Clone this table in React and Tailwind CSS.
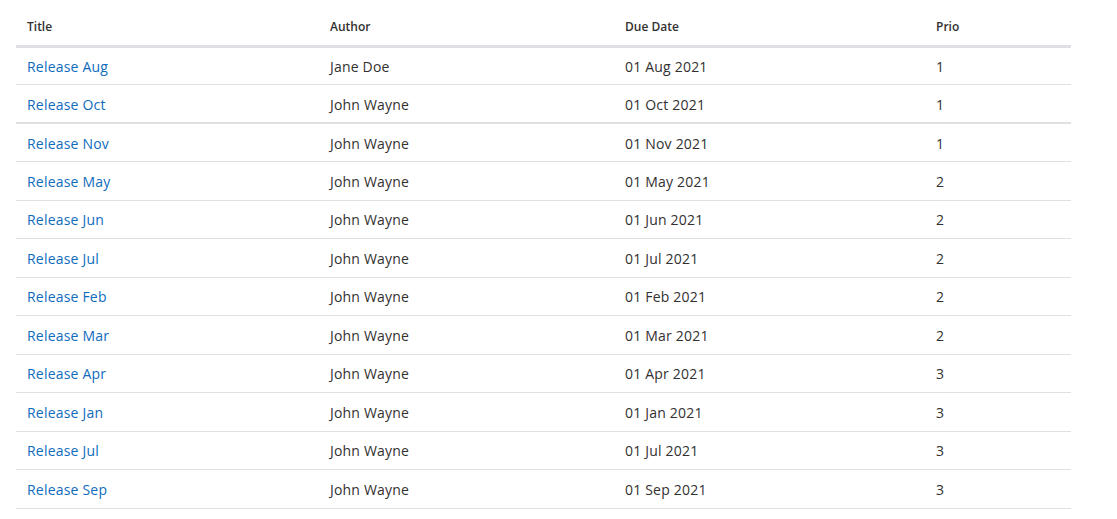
const rows = [
  { title: 'Release Aug', author: 'Jane Doe', due: '01 Aug 2021', prio: 1 },
  { title: 'Release Oct', author: 'John Wayne', due: '01 Oct 2021', prio: 1, thick: true },
  { title: 'Release Nov', author: 'John Wayne', due: '01 Nov 2021', prio: 1 },
  { title: 'Release May', author: 'John Wayne', due: '01 May 2021', prio: 2 },
  { title: 'Release Jun', author: 'John Wayne', due: '01 Jun 2021', prio: 2 },
  { title: 'Release Jul', author: 'John Wayne', due: '01 Jul 2021', prio: 2 },
  { title: 'Release Feb', author: 'John Wayne', due: '01 Feb 2021', prio: 2 },
  { title: 'Release Mar', author: 'John Wayne', due: '01 Mar 2021', prio: 2 },
  { title: 'Release Apr', author: 'John Wayne', due: '01 Apr 2021', prio: 3 },
  { title: 'Release Jan', author: 'John Wayne', due: '01 Jan 2021', prio: 3 },
  { title: 'Release Jul', author: 'John Wayne', due: '01 Jul 2021', prio: 3 },
  { title: 'Release Sep', author: 'John Wayne', due: '01 Sep 2021', prio: 3 },
];

const App = () => {
  return (
    <div className="min-h-screen bg-white px-4 pt-[10px] font-['Segoe_UI','Open_Sans',sans-serif] text-[#323130]">
      <table className="w-[1055px] border-collapse table-fixed">
        <colgroup>
          <col className="w-[303px]" />
          <col className="w-[295px]" />
          <col className="w-[311px]" />
          <col className="w-[146px]" />
        </colgroup>
        <thead>
          <tr className="h-[36px] border-b-[3px] border-[#e1dfe4]">
            <th className="pl-[11px] text-left text-xs font-semibold">Title</th>
            <th className="pl-[11px] text-left text-xs font-semibold">Author</th>
            <th className="pl-[11px] text-left text-xs font-semibold">Due Date</th>
            <th className="pl-[11px] text-left text-xs font-semibold">Prio</th>
          </tr>
        </thead>
        <tbody className="text-sm tracking-[0.2px]">
          {rows.map((row, i) => (
            <tr
              key={i}
              className={`h-[38.5px] border-b border-[#e1dfe4] ${row.thick ? 'border-b-2' : ''}`}
            >
              <td className="pl-[11px] pt-[2px]">
                <a href="#" className="text-[#0f6cbd]">{row.title}</a>
              </td>
              <td className="pl-[11px] pt-[2px]">{row.author}</td>
              <td className="pl-[11px] pt-[2px]">{row.due}</td>
              <td className="pl-[11px] pt-[2px]">{row.prio}</td>
            </tr>
          ))}
        </tbody>
      </table>
    </div>
  );
};

export default App;
